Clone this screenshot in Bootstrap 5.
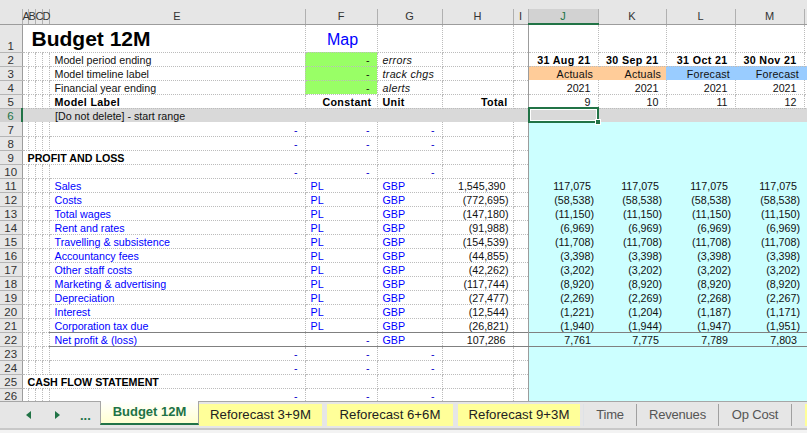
<!DOCTYPE html>
<html lang="en">
<head>
<meta charset="utf-8">
<title>Budget 12M</title>
<link href="https://cdn.jsdelivr.net/npm/bootstrap@5.3.0/dist/css/bootstrap.min.css" rel="stylesheet">
<style>
html,body{height:100%;overflow:hidden;background:#f3f3f3}
body{font-family:"Liberation Sans",Arial,sans-serif;font-size:11px;color:#111}
.topbar{height:9px;background:#e6e6e6}
.grid-wrap{height:392px;background:#fff}
.sheet.table{table-layout:fixed;width:807px;margin:0;border-collapse:collapse;font-size:10.7px}
.sheet.table>*>tr>*{padding:1px 0 0;line-height:12px;height:14px;border:0;border-right:1px dotted #bcbcbc;border-bottom:1px dotted #bcbcbc;background:transparent;color:#111;white-space:nowrap;box-shadow:none;font-weight:400;vertical-align:bottom}
.sheet.table>thead>tr>th{padding:0;line-height:13px;height:15px;background:#e6e6e6;text-align:center;font-size:11px;border-right:1px solid #b0b0b0;border-bottom:1px solid #9c9c9c;color:#333;vertical-align:middle}
.sheet.table>thead>tr>th.cur{background:#d2d2d2;color:#217346;border-bottom:2px solid #217346}
.sheet.table>tbody>tr>td.rh{background:#e6e6e6;text-align:center;font-size:11.5px;color:#333;border-right:1px solid #9c9c9c;border-bottom:1px solid #b5b5b5}
.sheet.table>tbody>tr>td.rh.cur{background:#d2d2d2;color:#217346;border-right:2px solid #217346}
.sheet.table>tbody>tr>td.ttl{font-size:21px;font-weight:700;color:#000;padding:0 0 0 9px;line-height:27px;vertical-align:middle}
.sheet.table>tbody>tr>td.map{font-size:16px;text-align:center;color:#0000ff;padding:3px 0 0 3px;line-height:24px;vertical-align:middle}
.sheet.table>tbody>tr>td.lbl{padding-left:5px}
.sheet.table>tbody>tr>td.sec{padding-left:5px;font-weight:700;color:#000}
.sheet.table>tbody>tr>td.b{font-weight:700;color:#000;letter-spacing:.35px}
.sheet.table>tbody>tr>td.i{padding-left:5px}
.sheet.table>tbody>tr>td.it{font-style:italic;letter-spacing:.3px}
.sheet.table>tbody>tr>td.l{padding-left:5px}
.sheet.table>tbody>tr>td.bl{color:#0000ff}
.sheet.table>tbody>tr>td.r{text-align:right;padding-right:7px}
.sheet.table>tbody>tr>td.h{text-align:right;padding-right:5px}
.sheet.table>tbody>tr>td.p{text-align:right;padding-right:4px}
.sheet.table>tbody>tr>td.d{text-align:right;padding-right:7px;color:#0000cc}
.sheet.table>tbody>tr>td.k{text-align:right;padding-right:7px;color:#111}
.sheet.table>tbody>tr>td.grn{background:#99ff66}
.sheet.table>tbody>tr>td.org{background:#ffcc99;border-right:0;border-bottom:0;letter-spacing:.2px}
.sheet.table>tbody>tr>td.blu{background:#99ccff;border-right:0;border-bottom:0;letter-spacing:.2px}
.sheet.table>tbody>tr>td.cy{background:#ccffff;border-right:0;border-bottom:0}
.sheet.table>tbody>tr>td.jl{border-left:1px solid #9c9c9c}
.sheet.table>tbody>tr.gr>td{background:#d9d9d9;border-right:0;border-bottom:0}
.sheet.table>tbody>tr>td.sel{position:relative}
.sel::before{content:"";position:absolute;left:-1px;right:-1px;top:-2px;bottom:-1px;border:2px solid #217346;box-shadow:inset 0 0 0 1px #fff}
.sel::after{content:"";position:absolute;right:-3px;bottom:-3px;width:6px;height:6px;background:#217346;border:1px solid #fff}
.sheet.table>tbody>tr.net>td:not(.rh):not(.a){border-top:1px solid #808080;border-bottom:1px solid #808080}
.tabbar{height:27px;background:#e6e6e6;border-top:1px solid #a6a6a6;color:#444;font-size:13.2px}
.navs{width:100px;color:#217346}
.navs>*{flex:0 0 auto}
.nav-l{margin-left:26px}
.nav-r{margin-left:24px}
.dots{margin-left:20px;font-weight:700;font-size:13px;line-height:1}
.stab{height:22px;white-space:nowrap;margin-top:2px}
.stab.act{width:99px;height:24px;margin-top:-1px;background:linear-gradient(#fff,#ffffd0);color:#217346;font-weight:700;font-size:13px;border:1px solid #a6a6a6;border-bottom:2px solid #217346;border-top:0}
.stab.yel{background:#ffff99;color:#222}
.stab.pl{color:#555;border-right:1px solid #a0a0a0;font-size:13px;letter-spacing:-.2px}
.sp{height:2px;background:#c8c8c8}
</style>
</head>
<body>
<div class="topbar"></div>
<div class="grid-wrap overflow-hidden">
<table class="table sheet">
<colgroup><col style="width:22px"><col style="width:6px"><col style="width:7px"><col style="width:7px"><col style="width:7px"><col style="width:256px"><col style="width:72px"><col style="width:65px"><col style="width:71px"><col style="width:15px"><col style="width:70px"><col style="width:68px"><col style="width:69px"><col style="width:69px"><col style="width:3px"></colgroup>
<thead><tr><th></th><th>A</th><th>B</th><th>C</th><th>D</th><th>E</th><th>F</th><th>G</th><th>H</th><th>I</th><th class="cur">J</th><th>K</th><th>L</th><th>M</th><th></th></tr></thead>
<tbody>
<tr style="height:28px"><td class="rh">1</td><td colspan="5" class="ttl">Budget 12M</td><td class="map">Map</td><td></td><td></td><td></td><td class="jl"></td><td></td><td></td><td></td><td></td></tr>
<tr><td class="rh">2</td><td class="a"></td><td></td><td></td><td></td><td class="lbl">Model period ending</td><td class="grn k">-</td><td class="i it">errors</td><td></td><td></td><td class="jl r b">31 Aug 21</td><td class="r b">30 Sep 21</td><td class="r b">31 Oct 21</td><td class="r b">30 Nov 21</td><td></td></tr>
<tr><td class="rh">3</td><td class="a"></td><td></td><td></td><td></td><td class="lbl">Model timeline label</td><td class="grn k">-</td><td class="i it">track chgs</td><td></td><td></td><td class="jl org h">Actuals</td><td class="org h">Actuals</td><td class="blu h">Forecast</td><td class="blu h">Forecast</td><td class="blu"></td></tr>
<tr><td class="rh">4</td><td class="a"></td><td></td><td></td><td></td><td class="lbl">Financial year ending</td><td class="grn k">-</td><td class="i it">alerts</td><td></td><td></td><td class="jl r">2021</td><td class="r">2021</td><td class="r">2021</td><td class="r">2021</td><td></td></tr>
<tr><td class="rh">5</td><td class="a"></td><td></td><td></td><td></td><td class="i b">Model Label</td><td class="h b">Constant</td><td class="i b">Unit</td><td class="h b">Total</td><td></td><td class="jl r">9</td><td class="r">10</td><td class="r">11</td><td class="r">12</td><td></td></tr>
<tr class="gr"><td class="rh cur">6</td><td colspan="5" style="padding-left:32px">[Do not delete] - start range</td><td></td><td></td><td></td><td></td><td class="jl sel"></td><td></td><td></td><td></td><td></td></tr>
<tr><td class="rh">7</td><td class="a"></td><td></td><td></td><td></td><td class="d">-</td><td class="d">-</td><td class="d">-</td><td></td><td></td><td class="jl cy"></td><td class="cy"></td><td class="cy"></td><td class="cy"></td><td class="cy"></td></tr>
<tr><td class="rh">8</td><td class="a"></td><td></td><td></td><td></td><td class="d">-</td><td class="d">-</td><td class="d">-</td><td></td><td></td><td class="jl cy"></td><td class="cy"></td><td class="cy"></td><td class="cy"></td><td class="cy"></td></tr>
<tr><td class="rh">9</td><td colspan="5" class="sec">PROFIT AND LOSS</td><td></td><td></td><td></td><td></td><td class="jl cy"></td><td class="cy"></td><td class="cy"></td><td class="cy"></td><td class="cy"></td></tr>
<tr><td class="rh">10</td><td class="a"></td><td></td><td></td><td></td><td class="d">-</td><td class="d">-</td><td class="d">-</td><td></td><td></td><td class="jl cy"></td><td class="cy"></td><td class="cy"></td><td class="cy"></td><td class="cy"></td></tr>
<tr><td class="rh">11</td><td class="a"></td><td></td><td></td><td></td><td class="lbl bl">Sales</td><td class="l bl">PL</td><td class="i bl">GBP</td><td class="r">1,545,390</td><td></td><td class="jl cy r">117,075</td><td class="cy r">117,075</td><td class="cy r">117,075</td><td class="cy r">117,075</td><td class="cy"></td></tr>
<tr><td class="rh">12</td><td class="a"></td><td></td><td></td><td></td><td class="lbl bl">Costs</td><td class="l bl">PL</td><td class="i bl">GBP</td><td class="p">(772,695)</td><td></td><td class="jl cy p">(58,538)</td><td class="cy p">(58,538)</td><td class="cy p">(58,538)</td><td class="cy p">(58,538)</td><td class="cy"></td></tr>
<tr><td class="rh">13</td><td class="a"></td><td></td><td></td><td></td><td class="lbl bl">Total wages</td><td class="l bl">PL</td><td class="i bl">GBP</td><td class="p">(147,180)</td><td></td><td class="jl cy p">(11,150)</td><td class="cy p">(11,150)</td><td class="cy p">(11,150)</td><td class="cy p">(11,150)</td><td class="cy"></td></tr>
<tr><td class="rh">14</td><td class="a"></td><td></td><td></td><td></td><td class="lbl bl">Rent and rates</td><td class="l bl">PL</td><td class="i bl">GBP</td><td class="p">(91,988)</td><td></td><td class="jl cy p">(6,969)</td><td class="cy p">(6,969)</td><td class="cy p">(6,969)</td><td class="cy p">(6,969)</td><td class="cy"></td></tr>
<tr><td class="rh">15</td><td class="a"></td><td></td><td></td><td></td><td class="lbl bl">Travelling &amp; subsistence</td><td class="l bl">PL</td><td class="i bl">GBP</td><td class="p">(154,539)</td><td></td><td class="jl cy p">(11,708)</td><td class="cy p">(11,708)</td><td class="cy p">(11,708)</td><td class="cy p">(11,708)</td><td class="cy"></td></tr>
<tr><td class="rh">16</td><td class="a"></td><td></td><td></td><td></td><td class="lbl bl">Accountancy fees</td><td class="l bl">PL</td><td class="i bl">GBP</td><td class="p">(44,855)</td><td></td><td class="jl cy p">(3,398)</td><td class="cy p">(3,398)</td><td class="cy p">(3,398)</td><td class="cy p">(3,398)</td><td class="cy"></td></tr>
<tr><td class="rh">17</td><td class="a"></td><td></td><td></td><td></td><td class="lbl bl">Other staff costs</td><td class="l bl">PL</td><td class="i bl">GBP</td><td class="p">(42,262)</td><td></td><td class="jl cy p">(3,202)</td><td class="cy p">(3,202)</td><td class="cy p">(3,202)</td><td class="cy p">(3,202)</td><td class="cy"></td></tr>
<tr><td class="rh">18</td><td class="a"></td><td></td><td></td><td></td><td class="lbl bl">Marketing &amp; advertising</td><td class="l bl">PL</td><td class="i bl">GBP</td><td class="p">(117,744)</td><td></td><td class="jl cy p">(8,920)</td><td class="cy p">(8,920)</td><td class="cy p">(8,920)</td><td class="cy p">(8,920)</td><td class="cy"></td></tr>
<tr><td class="rh">19</td><td class="a"></td><td></td><td></td><td></td><td class="lbl bl">Depreciation</td><td class="l bl">PL</td><td class="i bl">GBP</td><td class="p">(27,477)</td><td></td><td class="jl cy p">(2,269)</td><td class="cy p">(2,269)</td><td class="cy p">(2,268)</td><td class="cy p">(2,267)</td><td class="cy"></td></tr>
<tr><td class="rh">20</td><td class="a"></td><td></td><td></td><td></td><td class="lbl bl">Interest</td><td class="l bl">PL</td><td class="i bl">GBP</td><td class="p">(12,544)</td><td></td><td class="jl cy p">(1,221)</td><td class="cy p">(1,204)</td><td class="cy p">(1,187)</td><td class="cy p">(1,171)</td><td class="cy"></td></tr>
<tr><td class="rh">21</td><td class="a"></td><td></td><td></td><td></td><td class="lbl bl">Corporation tax due</td><td class="l bl">PL</td><td class="i bl">GBP</td><td class="p">(26,821)</td><td></td><td class="jl cy p">(1,940)</td><td class="cy p">(1,944)</td><td class="cy p">(1,947)</td><td class="cy p">(1,951)</td><td class="cy"></td></tr>
<tr class="net"><td class="rh">22</td><td class="a"></td><td class="a"></td><td class="a"></td><td class="a"></td><td class="lbl bl">Net profit &amp; (loss)</td><td class="d">-</td><td class="i bl">GBP</td><td class="r">107,286</td><td></td><td class="jl cy r">7,761</td><td class="cy r">7,775</td><td class="cy r">7,789</td><td class="cy r">7,803</td><td class="cy"></td></tr>
<tr><td class="rh">23</td><td class="a"></td><td></td><td></td><td></td><td class="d">-</td><td class="d">-</td><td class="d">-</td><td></td><td></td><td class="jl cy"></td><td class="cy"></td><td class="cy"></td><td class="cy"></td><td class="cy"></td></tr>
<tr><td class="rh">24</td><td class="a"></td><td></td><td></td><td></td><td class="d">-</td><td class="d">-</td><td class="d">-</td><td></td><td></td><td class="jl cy"></td><td class="cy"></td><td class="cy"></td><td class="cy"></td><td class="cy"></td></tr>
<tr><td class="rh">25</td><td colspan="5" class="sec">CASH FLOW STATEMENT</td><td></td><td></td><td></td><td></td><td class="jl cy"></td><td class="cy"></td><td class="cy"></td><td class="cy"></td><td class="cy"></td></tr>
<tr><td class="rh">26</td><td class="a"></td><td></td><td></td><td></td><td class="d">-</td><td class="d">-</td><td class="d">-</td><td></td><td></td><td class="jl cy"></td><td class="cy"></td><td class="cy"></td><td class="cy"></td><td class="cy"></td></tr>
</tbody>
</table>
</div>
<div class="tabbar d-flex align-items-start">
<div class="navs d-flex align-items-center stab">
<svg class="nav-l" width="5" height="8" viewBox="0 0 5 8"><path d="M5 0V8L0 4Z" fill="#217346"/></svg>
<svg class="nav-r" width="5" height="8" viewBox="0 0 5 8"><path d="M0 0V8L5 4Z" fill="#217346"/></svg>
<span class="dots">...</span>
</div>
<div class="stab act d-flex align-items-center justify-content-center">Budget 12M</div>
<div class="stab yel d-flex align-items-center justify-content-center" style="width:123px">Reforecast 3+9M</div>
<div class="stab yel d-flex align-items-center justify-content-center" style="width:126px;margin-left:5px">Reforecast 6+6M</div>
<div class="stab yel d-flex align-items-center justify-content-center" style="width:122px;margin-left:5px">Reforecast 9+3M</div>
<div class="stab pl d-flex align-items-center justify-content-center border-start" style="width:54px;margin-left:3px">Time</div>
<div class="stab pl d-flex align-items-center justify-content-center" style="width:82px">Revenues</div>
<div class="stab pl d-flex align-items-center justify-content-center" style="width:73px">Op Cost</div>
<div class="stab yel" style="width:2px;margin-left:13px"></div>
</div>
<div class="sp"></div>
<script src="https://cdn.jsdelivr.net/npm/bootstrap@5.3.0/dist/js/bootstrap.bundle.min.js"></script>
</body>
</html>
